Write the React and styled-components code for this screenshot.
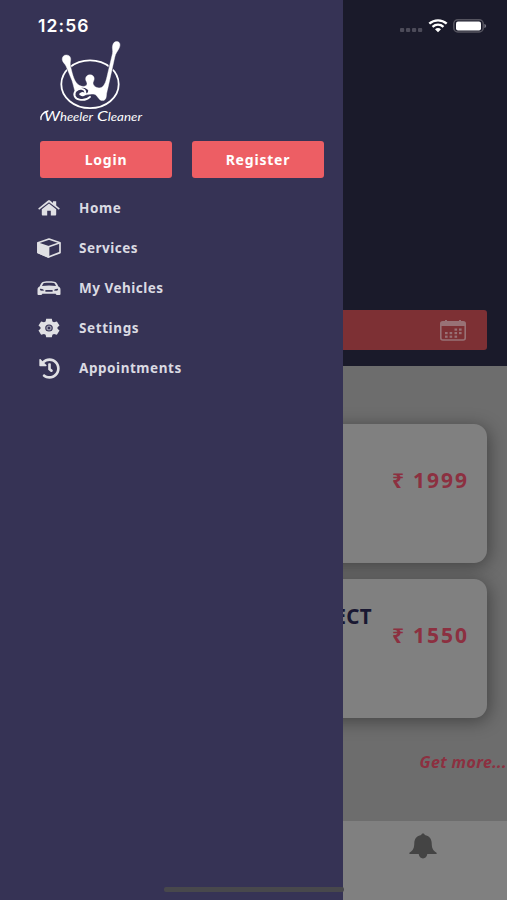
import React from 'react';
import styled, { createGlobalStyle } from 'styled-components';
import { FaHistory } from 'react-icons/fa';

const menu = [
  { label: 'Home', icon: <HomeIcon />, spacing: 0.6 },
  { label: 'Services', icon: <BoxIcon />, spacing: 0.5 },
  { label: 'My Vehicles', icon: <CarIcon />, spacing: 0.5 },
  { label: 'Settings', icon: <GearIcon />, spacing: 0.6 },
  { label: 'Appointments', icon: <FaHistory size={21} />, spacing: 0.55 },
];

export default function App() {
  return (
    <Screen>
      <GlobalStyle />
      <Hero>
        <DateBar>
          <CalendarIcon />
        </DateBar>
      </Hero>
      <Content>
        <Card>
          <Price>₹ 1999</Price>
        </Card>
        <Card>
          <CardTitle>ECT</CardTitle>
          <Price>₹ 1550</Price>
        </Card>
        <More>Get more...</More>
      </Content>
      <TabBar>
        <BellIcon />
      </TabBar>

      <Drawer>
        <Logo />
        <Buttons>
          <Button>Login</Button>
          <Button>Register</Button>
        </Buttons>
        <Menu>
          {menu.map(({ label, icon, spacing }) => (
            <MenuItem key={label}>
              <IconBox>{icon}</IconBox>
              <MenuLabel $spacing={spacing}>{label}</MenuLabel>
            </MenuItem>
          ))}
        </Menu>
      </Drawer>

      <StatusBar>
        <Time>12:56</Time>
        <StatusIcons />
      </StatusBar>
      <HomeIndicator />
    </Screen>
  );
}

function Logo() {
  return (
    <LogoSvg viewBox="38 40 108 86" fill="none" stroke="#fff">
      <ellipse cx="90" cy="84.3" rx="28.7" ry="23.9" strokeWidth="1.8" />
      <path stroke="#363355" strokeWidth="5" d="M68 64 73 83M112.5 60l-6 26" />
      <path
        fill="#fff"
        strokeWidth="0.4"
        d="M66.3 55c3.6 0 5 3 4.2 6-.6 2.8-.1 5 .7 8 1.3 5 3 13.5 8 16.3 3.2 1.8 7.1 1.4 7.8-1 .5-1.8-1.4-3.2-1.4-5.4 0-2.4 1.8-4.2 4.4-4.2s4.4 1.8 4.2 4.3c-.2 2-1.5 3-1.1 4.8.5 2.8 5 5.2 8.2 3.7 3.7-1.8 5-7.5 6.2-13l5-21c.7-3-.7-5.5.2-8.3.6-2.2 2-4 4.4-3.6 3.2.4 3.5 3.8 2 6.6-1.6 3.3-3.5 4.8-4.4 9.2l-6 27c-.9 4.5-2.2 8-2.4 12-.2 2.5-1.7 4.2-3.8 4.2-4.2 0-4.6-5.5-8.2-6.4-4-.8-8.8 1.3-12 1-3.8-.3-7-2.2-7.8-5.4-.8-3.3-1.4-5.5-2.5-9.2L66 66c-.8-2-3.8-4-3.8-6.8 0-2.5 1.6-4.2 4.1-4.2z"
      />
      <path stroke="#363355" strokeWidth="4.4" strokeLinecap="round" d="M77 95c0-4.5 5-6.5 9-4" />
      <path
        strokeWidth="1.9"
        strokeLinecap="round"
        d="M80.5 94c1.2 2.2 5.2 1.2 4.8-1.8-.5-3.5-6-4.7-9.3-1.5-3.4 3.5-1.3 8 3.5 8.9 4.5.8 8-.3 10.5-2.8"
      />
      <path strokeWidth="1.3" strokeLinecap="round" d="M41 119.5c-1-3 2-7.5 7-8.5" />
      <LogoText x="44" y="120.6" textLength="49" lengthAdjust="spacingAndGlyphs">
        <tspan fontSize="13.5">W</tspan>heeler
      </LogoText>
      <LogoText x="97" y="120.6" textLength="45" lengthAdjust="spacingAndGlyphs">
        <tspan fontSize="13.5">C</tspan>leaner
      </LogoText>
    </LogoSvg>
  );
}

function StatusIcons() {
  return (
    <svg width="88" height="18" viewBox="399 17 88 18" fill="none">
      <g fill="#4c4b59">
        <rect x="400" y="28" width="4.2" height="4" rx="1" />
        <rect x="406" y="28" width="4.2" height="4" rx="1" />
        <rect x="412" y="28" width="4.2" height="4" rx="1" />
        <rect x="418" y="28" width="4.2" height="4" rx="1" />
      </g>
      <path stroke="#fff" strokeWidth="2.4" d="M429.3 23.7c5-4.4 12.4-4.4 17.4 0M432.5 26.8c3.3-2.8 7.7-2.8 11 0" />
      <path fill="#fff" d="M435 29.2c1.8-1.5 4.2-1.5 6 0l-3 3z" />
      <rect x="453.8" y="19.8" width="29.4" height="12.2" rx="4" stroke="#55545f" strokeWidth="1.5" />
      <rect x="456" y="21.5" width="25" height="9" rx="2" fill="#fff" />
      <path fill="#777683" d="M484.4 24c2.3.5 2.3 3.5 0 4z" />
    </svg>
  );
}

function HomeIcon() {
  return (
    <svg width="22" height="16" viewBox="0 0 22 16" fill="currentColor">
      <path d="M.2 8.5 9.7.7c.8-.6 1.8-.6 2.6 0L15 2.9V1.2h3.2v4.3l3.6 3-.9 1.3L11 2.3 1.1 9.8z" />
      <path d="M3.8 9.2 11 3.5l7.2 5.7v5.1c0 .8-.4 1.2-1.2 1.2h-4.2v-4.8H9.2v4.8H5c-.8 0-1.2-.4-1.2-1.2z" />
    </svg>
  );
}

function BoxIcon() {
  return (
    <svg width="24" height="20" viewBox="0 0 24 20" stroke="currentColor" strokeWidth="1.7" strokeLinejoin="round">
      <path fill="none" d="M1 4.8 12 1l11 3.8v9.8L11.5 19 1 14.5z" />
      <path fill="currentColor" d="M1 5.2 11.5 8.8V19L1 14.5z" />
      <path fill="none" d="M11.5 8.8 23 4.8" />
    </svg>
  );
}

function CarIcon() {
  return (
    <svg width="24" height="15" viewBox="0 0 24 15" fill="currentColor">
      <path
        fillRule="evenodd"
        d="M3.8 3.1C4.5 1.7 5.2 1.1 6.8.8c3.6-.6 6.8-.6 10.4 0 1.6.3 2.3.9 3 2.3l1.2 2.4c1.4.7 2.1 1.6 2.1 3.2v4.2c0 .7-.5 1.1-1.1 1.1h-2.6c-.6 0-1-.5-1.1-1.2H5.3c-.1.7-.5 1.2-1.1 1.2H1.6c-.6 0-1.1-.4-1.1-1.1V8.7c0-1.6.7-2.5 2.1-3.2zM5 5.1c4.6-.7 9.4-.7 14 0l-1-2.2c-.3-.5-.7-.8-1.3-.9-3-.5-6.4-.5-9.4 0-.6.1-1 .4-1.3.9zM3.1 7.7c-.6 1 .4 2 1.7 2l2.4-.2C6.8 8.3 5 7.4 3.1 7.7zm17.8 0c-1.9-.3-3.7.6-4.1 1.8l2.4.2c1.3 0 2.3-1 1.7-2zM8.4 9.1v1.6h7.2V9.1z"
      />
    </svg>
  );
}

function GearIcon() {
  return (
    <svg width="22" height="20" viewBox="0 0 22 20" fill="currentColor">
      <path
        fillRule="evenodd"
        d="M8.2.8h5.6l.6 2.6 1.6.9 2.9-.8 2.6 4.1-2 1.7v1.5l2 1.8-2.6 4.1-2.9-.8-1.6.9-.6 2.5H8.2l-.6-2.5-1.6-.9-2.9.8-2.6-4.1 2-1.8V9.3l-2-1.7 2.6-4.1 2.9.8 1.6-.9zM11 6.4a3.8 3.6 0 1 0 0 7.2 3.8 3.6 0 1 0 0-7.2z"
      />
      <ellipse cx="11" cy="10" rx="2.7" ry="2.5" opacity=".6" />
      <ellipse cx="11" cy="10" rx="1.3" ry="1.3" fill="#363355" />
    </svg>
  );
}

function CalendarIcon() {
  const dots = [
    [14.5, 8.5], [19, 8.5],
    [5, 12], [9.6, 12], [14.5, 12], [19, 12],
    [5, 15.6], [9.6, 15.6], [14.5, 15.6],
  ];
  return (
    <svg width="26" height="21" viewBox="0 0 26 21" fill="#987175">
      <rect x=".8" y="1.8" width="24.4" height="18.2" rx="2" fill="none" stroke="#987175" strokeWidth="1.6" />
      <path d="M1 2h24v4H1zM5 0h2v2H5zM19 0h2v2h-2z" />
      {dots.map(([x, y]) => (
        <rect key={`${x}-${y}`} x={x} y={y} width="2.6" height="2.2" />
      ))}
    </svg>
  );
}

function BellIcon() {
  return (
    <svg width="28" height="26" viewBox="0 0 28 26" fill="#444">
      <path d="M12.2 2C12.3.9 13 .4 14 .4s1.7.5 1.8 1.6c4.5.8 6.7 3.8 6.9 8.1.2 4.6.6 7 4.9 9.7v1.3h-9.3c-.4 2.8-1.9 4.3-4.3 4.3s-3.9-1.5-4.3-4.3H.4v-1.3c4.3-2.7 4.7-5.1 4.9-9.7C5.5 5.8 7.7 2.8 12.2 2z" />
    </svg>
  );
}

const GlobalStyle = createGlobalStyle`
  * {
    box-sizing: border-box;
  }

  body {
    margin: 0;
    font-family: 'Noto Sans', 'Open Sans', sans-serif;
  }

  svg {
    display: block;
    flex: none;
  }
`;

const Screen = styled.div`
  position: relative;
  display: flex;
  flex-direction: column;
  width: 507px;
  height: 900px;
  overflow: hidden;
  background: #808080;
`;

const Hero = styled.header`
  display: flex;
  align-items: flex-end;
  height: 366px;
  padding: 0 20px 16px;
  background: #1a1a2a;
`;

const DateBar = styled.div`
  display: flex;
  flex: 1;
  align-items: center;
  justify-content: flex-end;
  height: 40px;
  padding-right: 21px;
  border-radius: 3px;
  background: #7d3034;
`;

const Content = styled.main`
  display: flex;
  flex-direction: column;
  gap: 16px;
  height: 455px;
  padding: 58px 0 0 20px;
  background: #6d6d6d;
`;

const Card = styled.section`
  display: flex;
  justify-content: flex-end;
  height: 139px;
  flex: none;
  margin-right: 20px;
  padding: 41px 18px 0 0;
  border-radius: 13px;
  background: #808080;
  box-shadow: 2px 3px 18px rgba(0, 0, 0, 0.4);
`;

const CardTitle = styled.h2`
  margin: -19px 20px 0 0;
  line-height: 30px;
  font-size: 20.5px;
  font-weight: bold;
  letter-spacing: 0.3px;
  color: #191832;
`;

const Price = styled.div`
  line-height: 30px;
  font-size: 21px;
  font-weight: bold;
  letter-spacing: 2px;
  word-spacing: -0.5px;
  color: #8c3040;
`;

const More = styled.div`
  margin-top: 16px;
  line-height: 24px;
  font-size: 16px;
  font-weight: bold;
  font-style: italic;
  letter-spacing: 0.35px;
  text-align: right;
  color: #8c3040;
`;

const TabBar = styled.nav`
  display: flex;
  flex: 1;
  justify-content: flex-end;
  padding: 12px 70px 0 0;
  background: #808080;
`;

const Drawer = styled.aside`
  position: absolute;
  top: 0;
  left: 0;
  width: 343px;
  height: 100%;
  padding: 40px 19px 0 38px;
  background: #363355;
`;

const LogoSvg = styled.svg`
  width: 108px;
  height: 86px;
`;

const LogoText = styled.text`
  fill: #fff;
  font-family: Lato, 'Liberation Sans', sans-serif;
  font-size: 10.5px;
  font-style: italic;
  font-weight: 400;
  stroke: none;
`;

const Buttons = styled.div`
  display: flex;
  gap: 20px;
  margin: 15px 0 0 2px;
`;

const Button = styled.button`
  flex: 1;
  height: 37px;
  padding: 0;
  border: 0;
  border-radius: 3px;
  background: #ed5e64;
  color: #fff;
  font-family: inherit;
  font-size: 14px;
  font-weight: bold;
  letter-spacing: 0.8px;
`;

const Menu = styled.ul`
  margin: 10px 0 0;
  padding: 0;
  list-style: none;
`;

const MenuItem = styled.li`
  display: flex;
  align-items: center;
  height: 40.1px;
`;

const IconBox = styled.div`
  display: flex;
  justify-content: center;
  width: 22px;
  margin-right: 19px;
  color: #e0e0e4;
`;

const MenuLabel = styled.span`
  font-size: 13.5px;
  font-weight: bold;
  letter-spacing: ${({ $spacing }) => $spacing}px;
  color: #dadae2;
`;

const StatusBar = styled.div`
  position: absolute;
  top: 0;
  left: 0;
  display: flex;
  align-items: center;
  justify-content: space-between;
  width: 100%;
  height: 51px;
  padding: 0 20px 0 38px;
`;

const Time = styled.div`
  font-family: Inter, sans-serif;
  font-size: 17.5px;
  font-weight: 600;
  letter-spacing: 1.1px;
  color: #fff;
`;

const HomeIndicator = styled.div`
  position: absolute;
  bottom: 8px;
  left: 164px;
  width: 180px;
  height: 5px;
  border-radius: 2px;
  background: #48484c;
`;
